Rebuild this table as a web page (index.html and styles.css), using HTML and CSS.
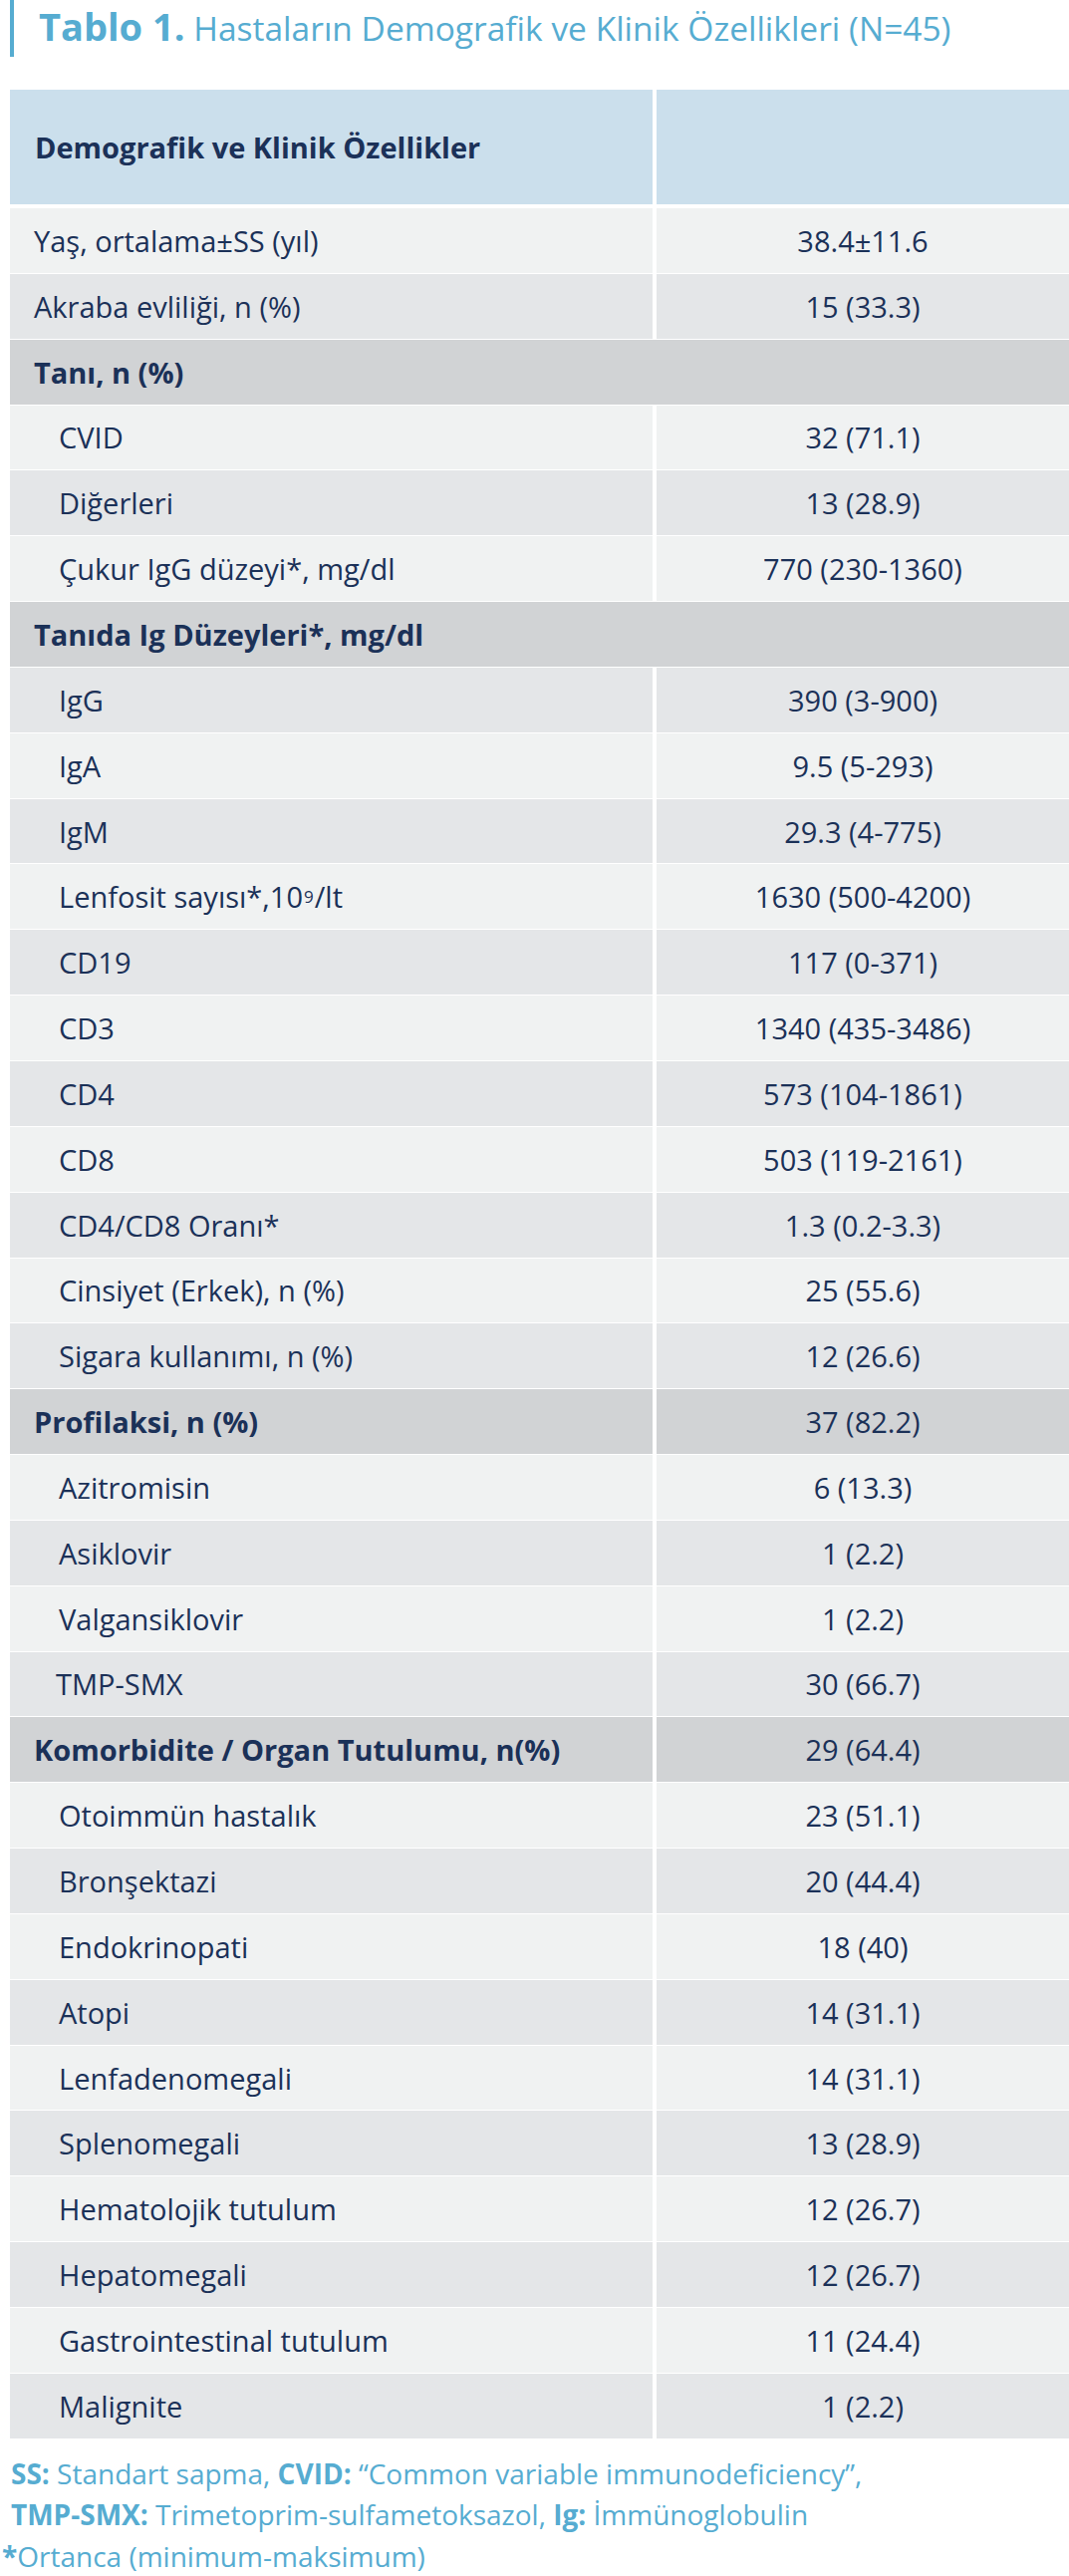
FILE: index.html
```html
<!DOCTYPE html>
<html lang="tr">
<head>
<meta charset="utf-8">
<title>Tablo 1</title>
<link rel="stylesheet" href="styles.css">
</head>
<body>
<div class="title"><b>Tablo 1.</b> Hastaların Demografik ve Klinik Özellikleri (N=45)</div>
<div class="table">
  <div class="row head">
    <div class="cell">Demografik ve Klinik Özellikler</div>
    <div class="cell"></div>
  </div>
  <div class="row light"><div class="cell">Yaş, ortalama±SS (yıl)</div><div class="cell val">38.4±11.6</div></div>
  <div class="row dark"><div class="cell">Akraba evliliği, n (%)</div><div class="cell val">15 (33.3)</div></div>
  <div class="row sec"><div class="cell span">Tanı, n (%)</div></div>
  <div class="row light"><div class="cell ind">CVID</div><div class="cell val">32 (71.1)</div></div>
  <div class="row dark"><div class="cell ind">Diğerleri</div><div class="cell val">13 (28.9)</div></div>
  <div class="row light"><div class="cell ind">Çukur IgG düzeyi*, mg/dl</div><div class="cell val">770 (230-1360)</div></div>
  <div class="row sec"><div class="cell span">Tanıda Ig Düzeyleri*, mg/dl</div></div>
  <div class="row dark"><div class="cell ind">IgG</div><div class="cell val">390 (3-900)</div></div>
  <div class="row light"><div class="cell ind">IgA</div><div class="cell val">9.5 (5-293)</div></div>
  <div class="row dark"><div class="cell ind">IgM</div><div class="cell val">29.3 (4-775)</div></div>
  <div class="row light"><div class="cell ind">Lenfosit sayısı*,10<sup>9</sup>/lt</div><div class="cell val">1630 (500-4200)</div></div>
  <div class="row dark"><div class="cell ind">CD19</div><div class="cell val">117 (0-371)</div></div>
  <div class="row light"><div class="cell ind">CD3</div><div class="cell val">1340 (435-3486)</div></div>
  <div class="row dark"><div class="cell ind">CD4</div><div class="cell val">573 (104-1861)</div></div>
  <div class="row light"><div class="cell ind">CD8</div><div class="cell val">503 (119-2161)</div></div>
  <div class="row dark"><div class="cell ind">CD4/CD8 Oranı*</div><div class="cell val">1.3 (0.2-3.3)</div></div>
  <div class="row light"><div class="cell ind">Cinsiyet (Erkek), n (%)</div><div class="cell val">25 (55.6)</div></div>
  <div class="row dark"><div class="cell ind">Sigara kullanımı, n (%)</div><div class="cell val">12 (26.6)</div></div>
  <div class="row sec"><div class="cell">Profilaksi, n (%)</div><div class="cell val">37 (82.2)</div></div>
  <div class="row light"><div class="cell ind">Azitromisin</div><div class="cell val">6 (13.3)</div></div>
  <div class="row dark"><div class="cell ind">Asiklovir</div><div class="cell val">1 (2.2)</div></div>
  <div class="row light"><div class="cell ind">Valgansiklovir</div><div class="cell val">1 (2.2)</div></div>
  <div class="row dark"><div class="cell ind2">TMP-SMX</div><div class="cell val">30 (66.7)</div></div>
  <div class="row sec"><div class="cell">Komorbidite / Organ Tutulumu, n(%)</div><div class="cell val">29 (64.4)</div></div>
  <div class="row light"><div class="cell ind">Otoimmün hastalık</div><div class="cell val">23 (51.1)</div></div>
  <div class="row dark"><div class="cell ind">Bronşektazi</div><div class="cell val">20 (44.4)</div></div>
  <div class="row light"><div class="cell ind">Endokrinopati</div><div class="cell val">18 (40)</div></div>
  <div class="row dark"><div class="cell ind">Atopi</div><div class="cell val">14 (31.1)</div></div>
  <div class="row light"><div class="cell ind">Lenfadenomegali</div><div class="cell val">14 (31.1)</div></div>
  <div class="row dark"><div class="cell ind">Splenomegali</div><div class="cell val">13 (28.9)</div></div>
  <div class="row light"><div class="cell ind">Hematolojik tutulum</div><div class="cell val">12 (26.7)</div></div>
  <div class="row dark"><div class="cell ind">Hepatomegali</div><div class="cell val">12 (26.7)</div></div>
  <div class="row light"><div class="cell ind">Gastrointestinal tutulum</div><div class="cell val">11 (24.4)</div></div>
  <div class="row dark"><div class="cell ind">Malignite</div><div class="cell val">1 (2.2)</div></div>
</div>
<div class="notes">
  <div class="note-line"><b>SS:</b> Standart sapma, <b>CVID:</b> “Common variable immunodeficiency”,</div>
  <div class="note-line"><b>TMP-SMX:</b> Trimetoprim-sulfametoksazol, <b>Ig:</b> İmmünoglobulin</div>
  <div class="note-line last"><b>*</b>Ortanca (minimum-maksimum)</div>
</div>
</body>
</html>
```

FILE: styles.css
```css
* { box-sizing: border-box; }

body {
  margin: 0;
  font-family: "Open Sans", "Noto Sans", sans-serif;
  background: #ffffff;
  color: #1b3158;
}

.title {
  margin-left: 10px;
  height: 57px;
  border-left: 4px solid #56acd1;
  padding-left: 25px;
  line-height: 52px;
  font-size: 33.5px;
  color: #56acd1;
  margin-bottom: 33px;
  white-space: nowrap;
}

.title b {
  font-size: 38px;
  font-weight: 700;
}

.table {
  margin-left: 10px;
  display: flex;
  flex-direction: column;
  gap: 1px;
}

.row {
  display: grid;
  grid-template-columns: 645px 414px;
  column-gap: 4px;
  height: 64.85px;
  font-size: 29px;
}

.cell {
  display: flex;
  align-items: center;
  padding-left: 24px;
  white-space: nowrap;
}

.cell.ind { padding-left: 49px; }
.cell.ind2 { padding-left: 46px; }

.cell.val {
  justify-content: center;
  padding-left: 0;
}

.cell.span { grid-column: 1 / -1; }

.head {
  height: 115px;
  margin-bottom: 3px;
  font-weight: 700;
}
.head .cell { background: #cbdfec; padding-left: 25px; }

.light .cell { background: #f0f2f2; }
.dark .cell { background: #e4e6e8; }
.sec .cell { background: #d1d3d5; }
.sec .cell:first-child { font-weight: 700; }

sup {
  font-size: 17px;
  line-height: 0;
  vertical-align: 9px;
  margin: 0 1px;
}

.notes {
  margin-top: 15px;
  color: #56acd1;
  font-size: 28px;
  line-height: 41.5px;
}

.note-line { padding-left: 11px; white-space: nowrap; }
.note-line.last { padding-left: 2px; }
.notes b { font-weight: 700; }
```
